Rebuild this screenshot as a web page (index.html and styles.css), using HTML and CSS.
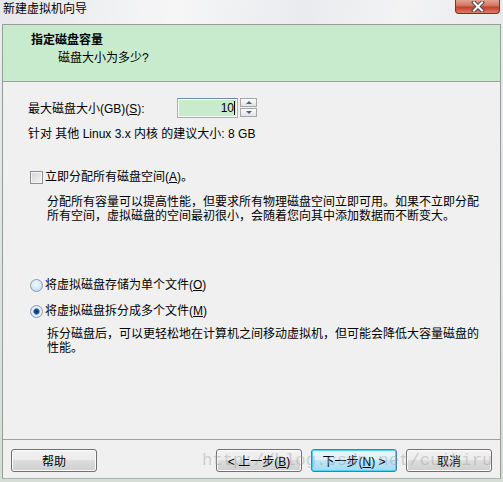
FILE: index.html
```html
<!DOCTYPE html>
<html lang="zh-CN">

<head>
    <meta charset="UTF-8">
    <title>新建虚拟机向导</title>
    <link rel="stylesheet" href="styles.css">
</head>

<body>
    <div class="window">
        <div class="titlebar">
            <span class="title">新建虚拟机向导</span>
            <span class="close-btn">
                <svg width="18" height="11" viewBox="0 0 18 11">
                    <path d="M5 1.5 L13 9.5 M13 1.5 L5 9.5" stroke="#4a4a4a" stroke-width="4" stroke-linecap="square" />
                    <path d="M5 1.5 L13 9.5 M13 1.5 L5 9.5" stroke="#ffffff" stroke-width="2" stroke-linecap="square" />
                </svg>
            </span>
        </div>

        <div class="dialog">
            <div class="header">
                <div class="header-title">指定磁盘容量</div>
                <div class="header-sub">磁盘大小为多少?</div>
            </div>

            <div class="content">
                <div class="size-row">
                    <span class="size-label">最大磁盘大小(GB)(<u>S</u>):</span>
                    <span class="spin-input"><span class="value">10</span><span class="caret"></span></span>
                    <span class="spinner">
                        <span class="spin-btn"><span class="tri-up"></span></span>
                        <span class="spin-btn"><span class="tri-down"></span></span>
                    </span>
                </div>
                <div class="hint">针对 其他 Linux 3.x 内核 的建议大小: 8 GB</div>

                <label class="option check-row">
                    <span class="checkbox"></span>
                    <span>立即分配所有磁盘空间(<u>A</u>)。</span>
                </label>
                <p class="desc desc-alloc">分配所有容量可以提高性能，但要求所有物理磁盘空间立即可用。如果不立即分配所有空间，虚拟磁盘的空间最初很小，会随着您向其中添加数据而不断变大。</p>

                <label class="option radio-first">
                    <span class="radio"></span>
                    <span>将虚拟磁盘存储为单个文件(<u>O</u>)</span>
                </label>
                <label class="option radio-second">
                    <span class="radio checked"></span>
                    <span>将虚拟磁盘拆分成多个文件(<u>M</u>)</span>
                </label>
                <p class="desc desc-split">拆分磁盘后，可以更轻松地在计算机之间移动虚拟机，但可能会降低大容量磁盘的性能。</p>
            </div>

            <div class="footer">
                <button class="btn">帮助</button>
                <div class="nav-buttons">
                    <button class="btn">&lt; 上一步(<u>B</u>)</button>
                    <button class="btn default">下一步(<u>N</u>) &gt;</button>
                    <button class="btn">取消</button>
                </div>
            </div>
        </div>

        <div class="watermark">http://blog.csdn.net/cuihiru</div>
    </div>
</body>

</html>
```

FILE: styles.css
```css
body {
    margin: 0;
    font-family: "Liberation Sans", "Noto Sans CJK SC", sans-serif;
    font-size: 12px;
    color: #000000;
    background-color: #e4e9ee;
}

.window {
    position: relative;
    width: 503px;
    height: 482px;
    display: flex;
    flex-direction: column;
    background: linear-gradient(180deg, #eceef1 0%, #e3e7ea 30%, #d5ddd6 100%);
    overflow: hidden;
}

.titlebar {
    height: 24px;
    display: flex;
    align-items: flex-start;
    justify-content: space-between;
    background: linear-gradient(100deg, #e6e8eb 0%, #f6f6f7 35%, #e9ebee 60%, #f3f3f4 80%, #e8eaec 100%);
}

.title {
    padding-left: 3px;
    line-height: 18px;
    color: #000000;
}

.close-btn {
    width: 43px;
    height: 13px;
    margin-right: 3px;
    display: flex;
    align-items: center;
    justify-content: center;
    border: 1px solid #7b3026;
    border-top: none;
    border-radius: 0 0 4px 4px;
    background: linear-gradient(180deg, #e3a394 0%, #d5705d 45%, #c0402c 55%, #d9806a 100%);
}

.dialog {
    flex: 1;
    margin: 0 2px 3px 2px;
    display: flex;
    flex-direction: column;
    background-color: #f0f0f0;
    border: 1px solid #9a9c9a;
    border-bottom-color: #a9b7a6;
}

.header {
    height: 56px;
    padding-left: 28px;
    background-color: #c7ebcc;
    border-bottom: 1px solid #a0a0a0;
    box-sizing: content-box;
}

.header-title {
    margin-top: 7px;
    line-height: 16px;
    font-weight: 700;
}

.header-sub {
    margin-top: 3px;
    padding-left: 27px;
    line-height: 14px;
}

.content {
    flex: 1;
    padding-left: 25px;
}

.size-row {
    margin-top: 15px;
    height: 21px;
    display: flex;
    align-items: center;
}

.size-label {
    width: 149px;
}

.spin-input {
    width: 61px;
    height: 20px;
    box-sizing: border-box;
    display: flex;
    align-items: center;
    justify-content: flex-end;
    padding-right: 2px;
    background-color: #c7ebcc;
    border: 1px solid #abadb3;
    border-top-color: #6e8aa8;
    box-shadow: inset 0 0 0 1px #ffffff;
}

.caret {
    width: 1px;
    height: 14px;
    background-color: #000000;
}

.spinner {
    margin-left: 2px;
    display: flex;
    flex-direction: column;
    gap: 1px;
}

.spin-btn {
    width: 17px;
    height: 9px;
    box-sizing: border-box;
    display: flex;
    align-items: center;
    justify-content: center;
    border: 1px solid #a7a7a7;
    background: linear-gradient(180deg, #fbfbfb, #e3e3e3);
}

.tri-up {
    border-left: 3px solid transparent;
    border-right: 3px solid transparent;
    border-bottom: 3px solid #4d6185;
}

.tri-down {
    border-left: 3px solid transparent;
    border-right: 3px solid transparent;
    border-top: 3px solid #4d6185;
}

.hint {
    margin-top: 9px;
    line-height: 14px;
}

.option {
    display: flex;
    align-items: center;
    gap: 2px;
    line-height: 14px;
    padding-left: 2px;
}

.check-row {
    margin-top: 29px;
}

.checkbox {
    width: 13px;
    height: 13px;
    box-sizing: border-box;
    border: 1px solid #8e8f8f;
    background: linear-gradient(135deg, #d4d4d4, #f6f6f6);
    box-shadow: inset 0 0 0 1px #f4f4f4;
}

.desc {
    margin: 0;
    padding-left: 19px;
    width: 432px;
    line-height: 14px;
}

.desc-alloc {
    margin-top: 11px;
}

.radio-first {
    margin-top: 55px;
}

.radio-second {
    margin-top: 12px;
}

.desc-split {
    margin-top: 9px;
}

.radio {
    width: 13px;
    height: 13px;
    box-sizing: border-box;
    border-radius: 50%;
    border: 1px solid #8a9cb0;
    background: radial-gradient(circle at 45% 40%, #f4faff 0%, #d3e6f6 55%, #a9c8e4 100%);
}

.radio.checked {
    background: radial-gradient(circle, #0b2e64 0%, #1c4f93 28%, #5f8fc4 38%, #e9f1f9 45%, #c7d9ec 100%);
}

.footer {
    display: flex;
    padding: 9px 8px 6px 8px;
    border-top: 1px solid #a0a0a0;
}

.nav-buttons {
    margin-left: auto;
    display: flex;
    gap: 9px;
}

.btn {
    width: 86px;
    height: 23px;
    padding: 0;
    font-family: inherit;
    font-size: 12px;
    color: #000000;
    border: 1px solid #707070;
    border-radius: 3px;
    background: linear-gradient(180deg, #f2f2f2 0%, #ebebeb 50%, #dddddd 50%, #cfcfcf 100%);
    box-shadow: inset 0 0 0 1px #fcfcfc;
}

.btn.default {
    border-color: #3c7fb1;
    background: linear-gradient(180deg, #eaf6fd 0%, #d9f0fc 50%, #bee6fd 50%, #a7d9f5 100%);
    box-shadow: inset 0 0 0 1px #48d4fb;
}

.watermark {
    position: absolute;
    left: 202px;
    top: 450px;
    font-family: "Liberation Mono", monospace;
    font-size: 17.3px;
    line-height: 22px;
    color: rgba(160, 160, 160, 0.45);
    pointer-events: none;
}
```
